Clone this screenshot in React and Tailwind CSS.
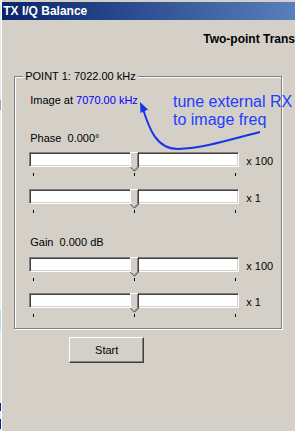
import React from "react";

function Slider({ label }) {
  return (
    <div className="flex items-start">
      <div className="relative w-[210px]">
        <div className="h-[15px] border border-t-[#808080] border-l-[#808080] border-b-white border-r-white bg-white shadow-[inset_1px_1px_0_#404040,inset_-1px_-1px_0_#d4d0c8]" />
        <svg className="absolute left-[101px] top-0" width="9" height="20" viewBox="0 0 9 20">
          <polygon points="0,0 9,0 9,15 4.5,19.5 0,15" fill="#d4d0c8" />
          <polyline points="0.5,15 0.5,0.5 8,0.5" fill="none" stroke="#fff" />
          <polyline points="8.5,0 8.5,15.2 4.5,19.2 0.5,15.2" fill="none" stroke="#404040" />
          <polyline points="7.5,1 7.5,14.8 4.5,17.8" fill="none" stroke="#808080" />
        </svg>
        <div className="mt-[6px] h-[3px] flex justify-between pl-[4px] pr-[3px]">
          <div className="w-px h-[3px] bg-black" />
          <div className="w-px h-[3px] bg-black" />
          <div className="w-px h-[3px] bg-black" />
        </div>
      </div>
      <span className="ml-[7px] mt-[3px] leading-[13px]">{label}</span>
    </div>
  );
}

export default function App() {
  return (
    <div className="relative w-[295px] h-[431px] overflow-hidden bg-[#d4d0c8] flex text-[11px] leading-[13px] text-black font-['Liberation_Sans',Arial,sans-serif]">
      <div className="w-[2px] flex flex-col bg-[#e4e8e4]">
        <div className="h-[100px]" />
        <div className="h-[10px] bg-[#a0a0a0]" />
        <div className="h-[200px] bg-[#e8f0e8]" />
        <div className="h-[20px] bg-[#b8dcf0]" />
        <div className="h-[73px]" />
        <div className="h-[8px] bg-[#10208c]" />
        <div className="h-[8px]" />
        <div className="h-[10px] bg-[#10208c]" />
      </div>
      <div className="w-px bg-white" />
      <div className="flex-1 flex flex-col pt-[2px]">
        <div className="ml-px h-[18px] pl-px bg-gradient-to-r from-[#0a246a] to-[#5a7fbd] text-white font-bold text-[12px] leading-[18px] whitespace-nowrap">
          TX I/Q Balance
        </div>
        <div className="ml-[202px] mt-[12px] font-bold text-[12px] leading-[14px] whitespace-nowrap">
          Two-point Trans
        </div>
        <div className="relative ml-[13px] mt-[30px] w-[268px] h-[253px] border border-[#808080] shadow-[inset_1px_1px_0_#fff,1px_1px_0_#fff] pt-[17px] pl-[14px]">
          <span className="absolute left-[8px] -top-[7px] px-[2px] bg-[#d4d0c8] whitespace-nowrap">
            POINT 1: 7022.00 kHz
          </span>
          <div className="ml-px whitespace-nowrap">
            Image at <span className="text-[#0000ff]">7070.00 kHz</span>
          </div>
          <div className="ml-px mt-[25px]">Phase&nbsp; 0.000°</div>
          <div className="mt-[7px]">
            <Slider label="x 100" />
          </div>
          <div className="mt-[13px]">
            <Slider label="x 1" />
          </div>
          <div className="ml-px mt-[23px]">Gain&nbsp; 0.000 dB</div>
          <div className="mt-[8px]">
            <Slider label="x 100" />
          </div>
          <div className="mt-[12px]">
            <Slider label="x 1" />
          </div>
        </div>
        <button className="ml-[68px] mt-[8px] w-[75px] h-[26px] border border-t-white border-l-white border-b-[#404040] border-r-[#404040] shadow-[inset_-1px_-1px_0_#808080] bg-[#d4d0c8] text-[11px] leading-[13px]">
          Start
        </button>
      </div>

      <div className="absolute left-[173px] top-[93px] text-[16px] leading-[18px] text-[#1e3cff] whitespace-nowrap">
        tune external RX
        <br />
        to image freq
      </div>
      <svg className="absolute left-0 top-0" width="295" height="200" viewBox="0 0 295 200">
        <path d="M143 109 C149 128, 156 149, 178 149 C205 148, 232 139, 260 132" fill="none" stroke="#1a35e8" strokeWidth="2" />
        <polygon points="140,102 148,109.5 140.5,113" fill="#1a35e8" />
      </svg>
    </div>
  );
}
